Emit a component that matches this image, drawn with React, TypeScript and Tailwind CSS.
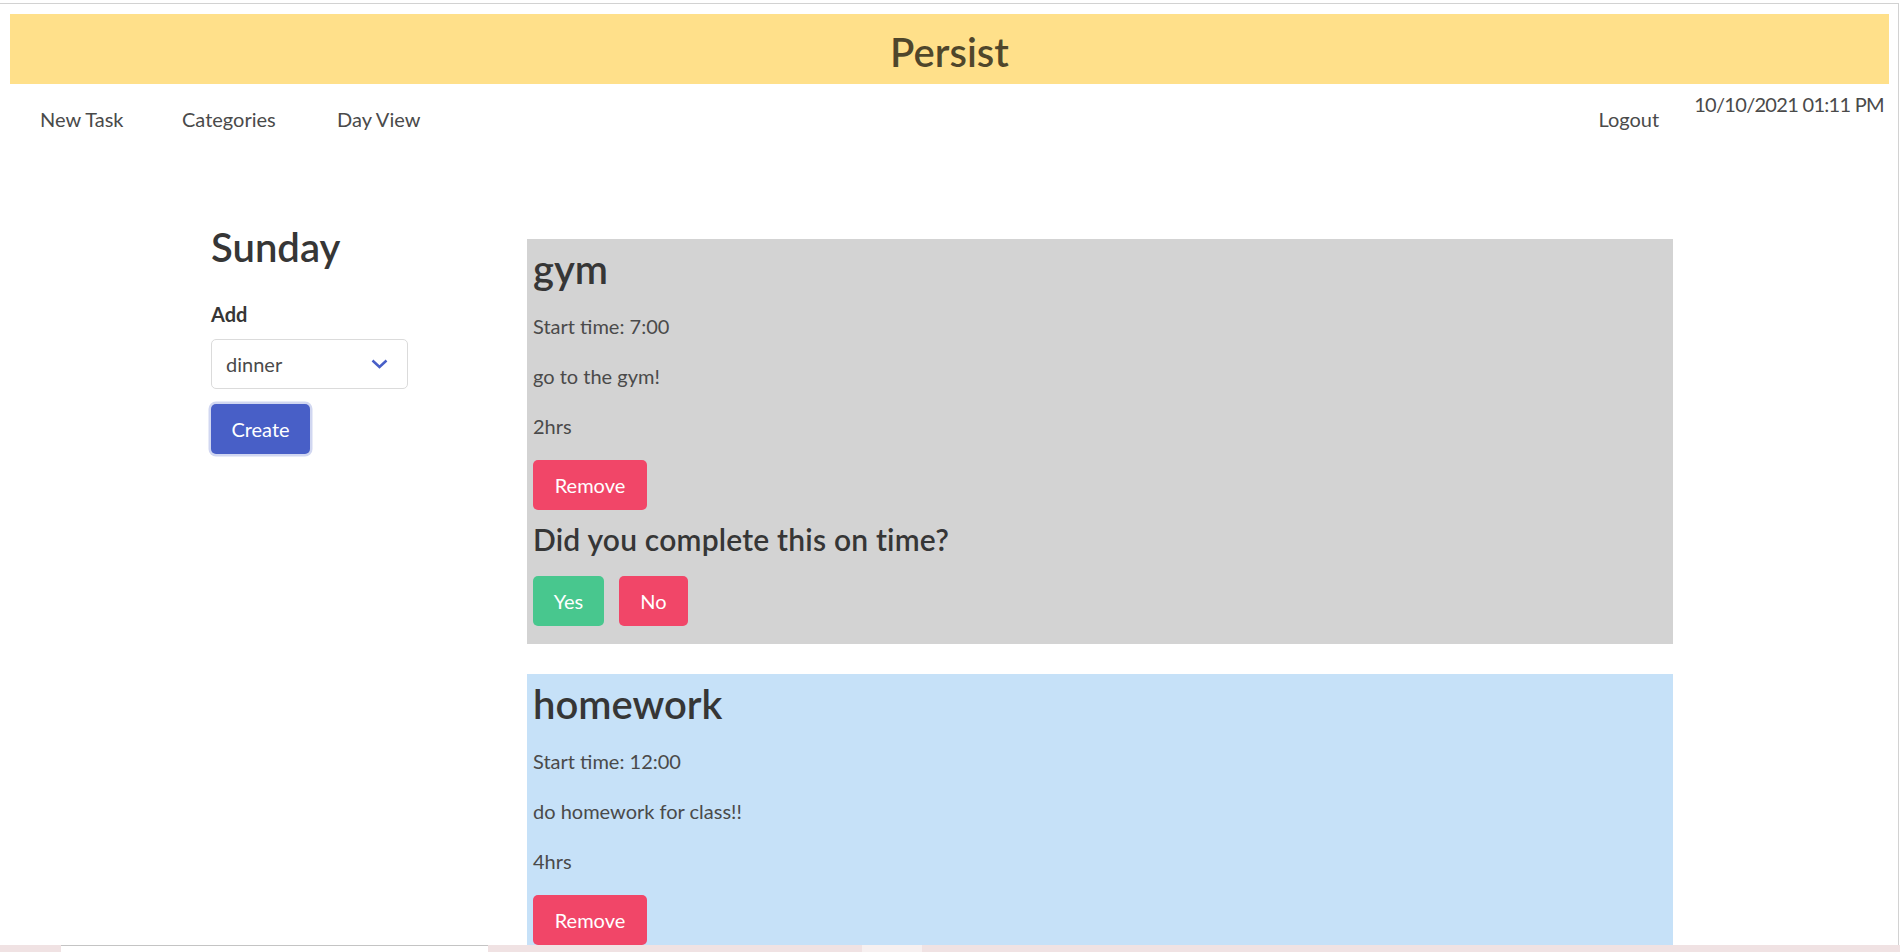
import React from 'react'

type Task = {
  title: string
  start: string
  description: string
  duration: string
  bg: string
  askDone?: boolean
}

const tasks: Task[] = [
  {
    title: 'gym',
    start: '7:00',
    description: 'go to the gym!',
    duration: '2hrs',
    bg: 'bg-[#d3d3d3]',
    askDone: true,
  },
  {
    title: 'homework',
    start: '12:00',
    description: 'do homework for class!!',
    duration: '4hrs',
    bg: 'bg-[#c6e1f8]',
  },
]

function TaskCard({ task }: { task: Task }) {
  return (
    <div className={`${task.bg} px-[6px] pt-[8px] pb-[18px]`}>
      <h2 className="mb-[19px] text-[40px] leading-[45px] font-semibold text-[#363636]">{task.title}</h2>
      <p className="mb-[20px] text-[20px] leading-[30px]">Start time: {task.start}</p>
      <p className="mb-[20px] text-[20px] leading-[30px]">{task.description}</p>
      <p className="mb-[19px] text-[20px] leading-[30px]">{task.duration}</p>
      <button className="h-[50px] w-[114px] rounded-[5px] bg-[#f14668] text-[20px] text-white">Remove</button>
      {task.askDone && (
        <>
          <h3 className="mt-[12px] text-[30px] leading-[34px] font-semibold tracking-[0.2px] text-[#363636]">
            Did you complete this on time?
          </h3>
          <div className="mt-[20px] flex gap-[15px]">
            <button className="h-[50px] w-[71px] rounded-[5px] bg-[#48c78e] text-[20px] text-white">Yes</button>
            <button className="h-[50px] w-[69px] rounded-[5px] bg-[#f14668] text-[20px] text-white">No</button>
          </div>
        </>
      )}
    </div>
  )
}

export default function App() {
  return (
    <div className="h-[952px] w-[1900px] overflow-hidden bg-white font-['Lato','Open_Sans',sans-serif] text-[#4a4a4a]">
      <div className="h-[945px] pt-[3px]">
        <div className="h-full w-[1899px] overflow-hidden border-t border-r border-[#d2d2d2] pt-[10px] pr-[9px] pl-[10px]">
          {/* header */}
          <div className="flex h-[70px] justify-center bg-[#ffe08a] pt-[16px]">
            <h1 className="text-[40px] leading-[45px] font-semibold text-black/70">Persist</h1>
          </div>

          {/* nav */}
          <nav className="flex h-[50px] items-start text-[20px] leading-[30px]">
            <a className="mt-[20px] ml-[30px] w-[142px]">New Task</a>
            <a className="mt-[20px] w-[155px]">Categories</a>
            <a className="mt-[20px]">Day View</a>
            <a className="mt-[20px] ml-auto">Logout</a>
            <span className="mt-[5px] ml-[35px] mr-[5px] tracking-[-0.7px]">10/10/2021 01:11 PM</span>
          </nav>

          {/* day */}
          <main className="flex items-start pl-[201px]">
            <div className="w-[316px] shrink-0 pt-[91px]">
              <h2 className="text-[40px] leading-[45px] font-semibold text-[#363636]">Sunday</h2>
              <label className="mt-[29px] block text-[20px] leading-[30px] font-bold text-[#363636]">Add</label>
              <div className="mt-[10px] flex h-[50px] w-[197px] items-center justify-between rounded-[5px] border border-[#dbdbdb] pr-[19px] pl-[14px] text-[20px]">
                <span>dinner</span>
                <svg width="17" height="10" viewBox="0 0 17 10" fill="none">
                  <polyline points="1.5,1.5 8.5,8 15.5,1.5" stroke="#485fc7" strokeWidth="2.5" />
                </svg>
              </div>
              <button className="mt-[15px] h-[50px] w-[99px] rounded-[5px] bg-[#485fc7] text-[20px] text-white ring-[2.5px] ring-[#485fc7]/25">
                Create
              </button>
            </div>
            <div className="w-[1146px] shrink-0 space-y-[30px] pt-[105px]">
              {tasks.map((t) => (
                <TaskCard key={t.title} task={t} />
              ))}
            </div>
          </main>
        </div>
      </div>

      {/* bottom strip */}
      <div className="flex h-[7px] bg-[#f0e2e3]">
        <div className="ml-[61px] w-[427px] border-t border-[#c4c4c4] bg-white" />
        <div className="ml-[374px] w-[60px] bg-[#f7f0f0]" />
      </div>
    </div>
  )
}
